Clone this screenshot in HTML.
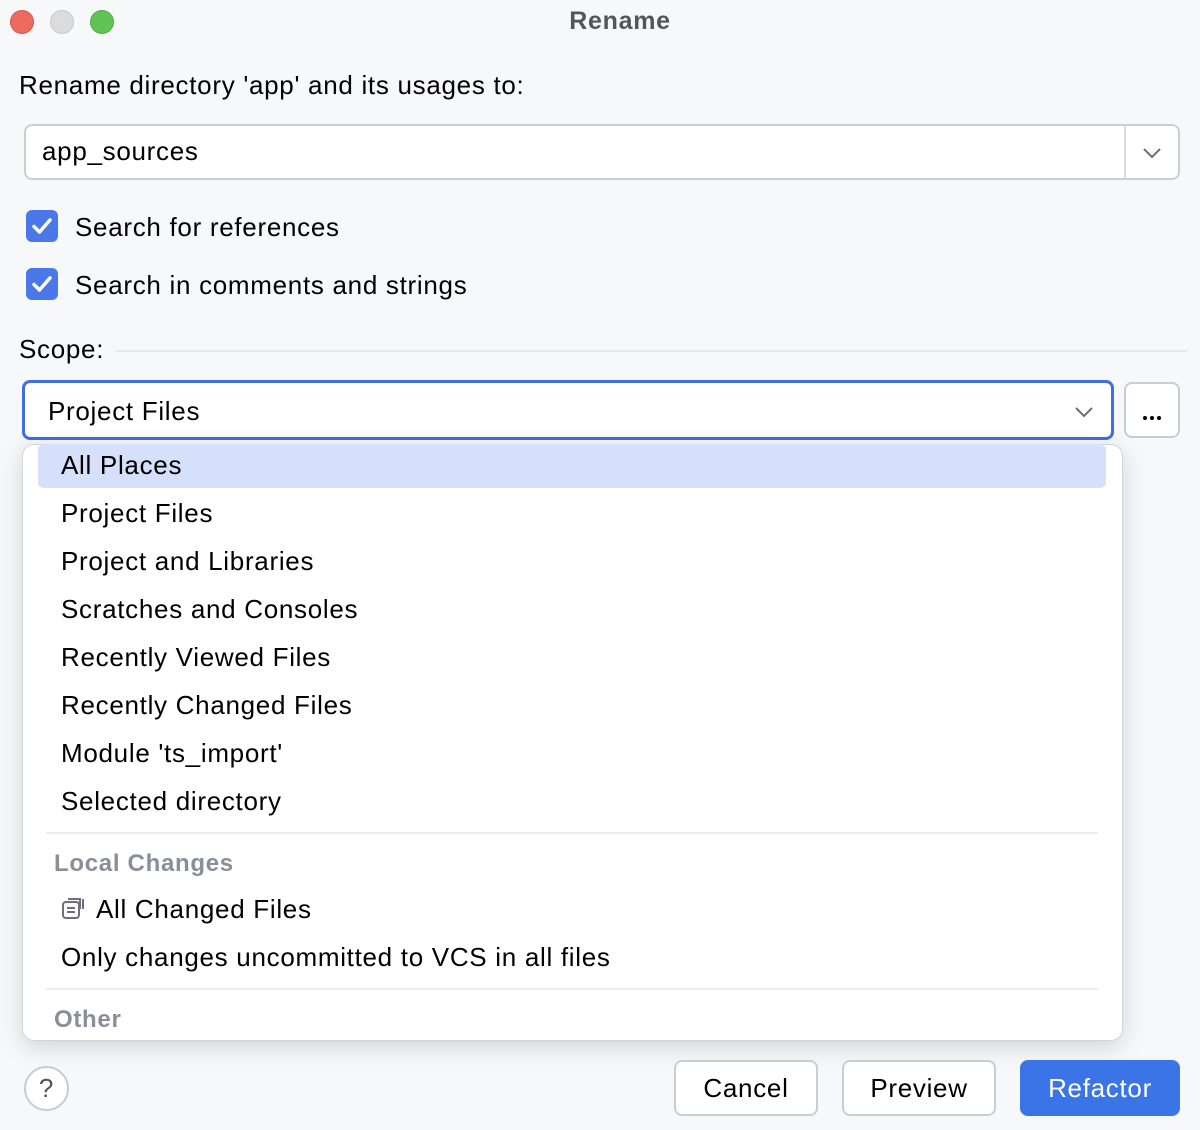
<!DOCTYPE html>
<html><head><style>
*{box-sizing:border-box;margin:0;padding:0}
body{width:1200px;height:1130px;background:#f7f8fa;font-family:"Liberation Sans",sans-serif;color:#000;position:relative;overflow:hidden;font-size:26px;letter-spacing:.7px}
.a{position:absolute;white-space:nowrap}
.dot{position:absolute;top:10px;width:24px;height:24px;border-radius:50%}
.cb{position:absolute;left:26px;width:32px;height:32px;border-radius:6px;background:#4a78e8}
.btn{position:absolute;top:1060px;height:56px;border:2px solid #c9ccd6;border-radius:8px;background:#fff;text-align:center;line-height:52px}
.it{position:absolute;left:61px;white-space:nowrap}
</style></head><body>
<div class="dot" style="left:10px;background:#ec6a5e;border:1px solid #d65549"></div>
<div class="dot" style="left:50px;background:#dcdcdc;border:1px solid #c8c8c8"></div>
<div class="dot" style="left:90px;background:#5fc453;border:1px solid #4eae43"></div>
<div class="a" style="left:0;width:1240px;text-align:center;top:7px;font-weight:bold;color:#555;font-size:25px">Rename</div>
<div class="a" style="left:19px;top:70px">Rename directory 'app' and its usages to:</div>
<div class="a" style="left:24px;top:124px;width:1156px;height:56px;border:2px solid #ccced6;border-radius:8px;background:#fff"></div>
<div class="a" style="left:1124px;top:126px;width:2px;height:52px;background:#ddd"></div>
<svg class="a" style="left:1142px;top:145px" width="20" height="14"><path d="M2 4l8 8 8-8" fill="none" stroke="#6c707e" stroke-width="2"/></svg>
<div class="a" style="left:42px;top:136px">app_sources</div>
<div class="cb" style="top:210px"></div><svg class="a" style="left:26px;top:210px" width="32" height="32"><path d="M8 16.5l5.5 5.5 10.5-12" fill="none" stroke="#fff" stroke-width="3.5" stroke-linecap="round" stroke-linejoin="round"/></svg>
<div class="a" style="left:75px;top:212px">Search for references</div>
<div class="cb" style="top:268px"></div><svg class="a" style="left:26px;top:268px" width="32" height="32"><path d="M8 16.5l5.5 5.5 10.5-12" fill="none" stroke="#fff" stroke-width="3.5" stroke-linecap="round" stroke-linejoin="round"/></svg>
<div class="a" style="left:75px;top:270px">Search in comments and strings</div>
<div class="a" style="left:19px;top:334px">Scope:</div>
<div class="a" style="left:115px;top:350px;width:1072px;height:2px;background:#e8e9ed"></div>
<div class="a" style="left:22px;top:380px;width:1092px;height:60px;border:3px solid #3f6fe0;border-radius:8px;background:#fff"></div>
<div class="a" style="left:48px;top:396px">Project Files</div>
<svg class="a" style="left:1074px;top:405px" width="20" height="14"><path d="M2 3l8 8 8-8" fill="none" stroke="#6c707e" stroke-width="2"/></svg>
<div class="a" style="left:1124px;top:382px;width:56px;height:56px;border:2px solid #c9ccd6;border-radius:8px;background:#fff"></div>
<svg class="a" style="left:1124px;top:382px" width="56" height="56"><circle cx="21" cy="36" r="2" fill="#000"/><circle cx="28" cy="36" r="2" fill="#000"/><circle cx="35" cy="36" r="2" fill="#000"/></svg>
<div class="a" style="left:22px;top:444px;width:1101px;height:597px;background:#fff;border:1px solid #d3d5db;border-radius:12px;box-shadow:0 6px 24px rgba(0,0,0,.15)"></div>
<div class="a" style="left:38px;top:444px;width:1068px;height:44px;background:#d6e0fa;border-radius:6px"></div>
<div class="it" style="top:450px">All Places</div>
<div class="it" style="top:498px">Project Files</div>
<div class="it" style="top:546px">Project and Libraries</div>
<div class="it" style="top:594px">Scratches and Consoles</div>
<div class="it" style="top:642px">Recently Viewed Files</div>
<div class="it" style="top:690px">Recently Changed Files</div>
<div class="it" style="top:738px">Module 'ts_import'</div>
<div class="it" style="top:786px">Selected directory</div>
<div class="a" style="left:46px;top:832px;width:1052px;height:2px;background:#ebecf0"></div>
<div class="a" style="left:54px;top:850px;font-weight:bold;color:#8a8e99;font-size:24px">Local Changes</div>
<svg class="a" style="left:62px;top:897px" width="24" height="24"><rect x="1" y="5" width="16" height="16" rx="3" fill="none" stroke="#6c707e" stroke-width="2"/><path d="M5 11h8M5 15h8" stroke="#6c707e" stroke-width="2"/><path d="M6 2h12v10M21 2v10" fill="none" stroke="#6c707e" stroke-width="2"/></svg>
<div class="it" style="left:96px;top:894px">All Changed Files</div>
<div class="it" style="top:942px">Only changes uncommitted to VCS in all files</div>
<div class="a" style="left:46px;top:988px;width:1052px;height:2px;background:#ebecf0"></div>
<div class="a" style="left:54px;top:1006px;font-weight:bold;color:#8a8e99;font-size:24px">Other</div>
<div class="a" style="left:24px;top:1066px;width:45px;height:45px;border:2px solid #c9ccd6;border-radius:50%;background:#fff;text-align:center;line-height:40px;color:#555">?</div>
<div class="btn" style="left:674px;width:144px">Cancel</div>
<div class="btn" style="left:842px;width:154px">Preview</div>
<div class="btn" style="left:1020px;width:160px;background:#3b74e6;border-color:#3b74e6;color:#fff">Refactor</div>
</body></html>
